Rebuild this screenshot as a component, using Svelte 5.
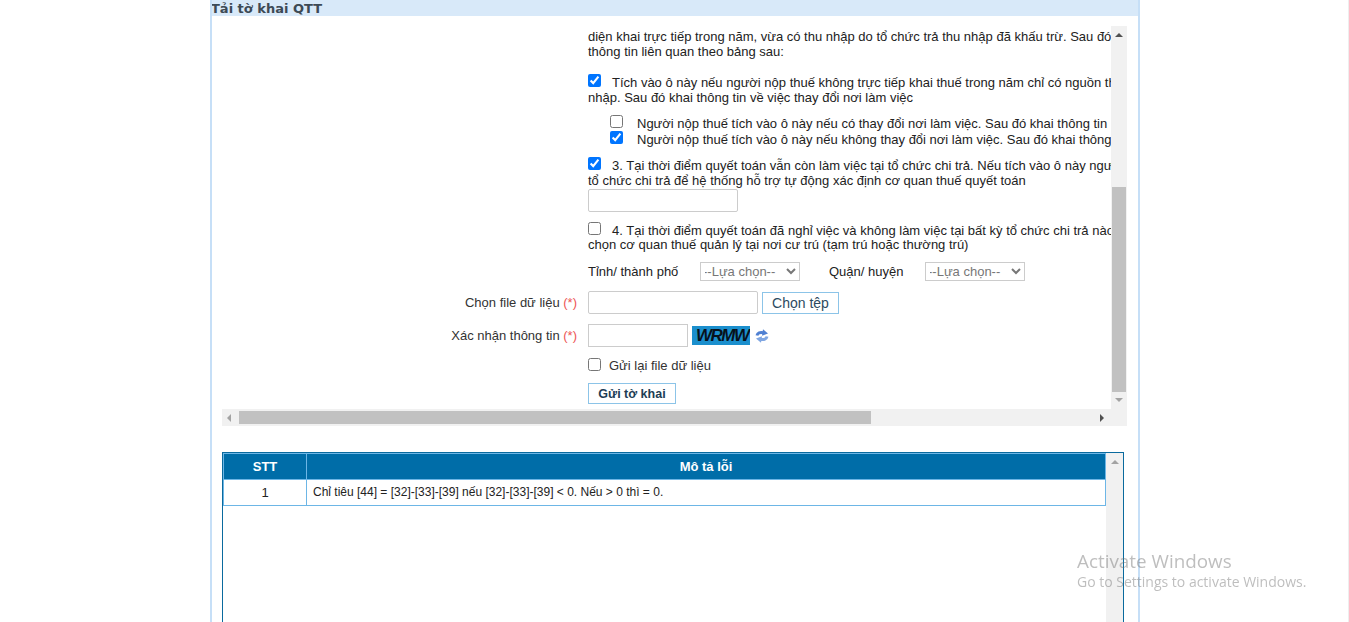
<script>
    // Dữ liệu bảng lỗi
    let errors = [
        { stt: 1, text: 'Chỉ tiêu [44] = [32]-[33]-[39] nếu [32]-[33]-[39] < 0. Nếu > 0 thì = 0.' }
    ];
</script>

<div class="panel">
    <div class="panel-title">Tải tờ khai QTT</div>

    <div class="panel-body">
        <div class="scrollbox">
            <div class="viewport">
                <div class="form">
                    <div class="field intro">
                        <p>diện khai trực tiếp trong năm, vừa có thu nhập do tổ chức trả thu nhập đã khấu trừ. Sau đó khai</p>
                        <p>thông tin liên quan theo bảng sau:</p>
                    </div>

                    <div class="field check-1">
                        <p><input type="checkbox" checked /><span class="lead">Tích vào ô này nếu người nộp thuế không trực tiếp khai thuế trong năm chỉ có nguồn thu</span></p>
                        <p>nhập. Sau đó khai thông tin về việc thay đổi nơi làm việc</p>
                    </div>

                    <div class="field sub">
                        <p><input type="checkbox" /><span class="sub-text">Người nộp thuế tích vào ô này nếu có thay đổi nơi làm việc. Sau đó khai thông tin</span></p>
                        <p><input type="checkbox" checked /><span class="sub-text">Người nộp thuế tích vào ô này nếu không thay đổi nơi làm việc. Sau đó khai thông tin</span></p>
                    </div>

                    <div class="field check-3">
                        <p><input type="checkbox" checked /><span class="lead">3. Tại thời điểm quyết toán vẫn còn làm việc tại tổ chức chi trả. Nếu tích vào ô này người</span></p>
                        <p>tổ chức chi trả để hệ thống hỗ trợ tự động xác định cơ quan thuế quyết toán</p>
                        <input class="text org" type="text" />
                    </div>

                    <div class="field check-4">
                        <p><input type="checkbox" /><span class="lead">4. Tại thời điểm quyết toán đã nghỉ việc và không làm việc tại bất kỳ tổ chức chi trả nào</span></p>
                        <p>chọn cơ quan thuế quản lý tại nơi cư trú (tạm trú hoặc thường trú)</p>
                    </div>

                    <div class="field place">
                        <span class="place-label">Tỉnh/ thành phố</span>
                        <select><option>--Lựa chọn--</option></select>
                        <span class="place-label second">Quận/ huyện</span>
                        <select><option>--Lựa chọn--</option></select>
                    </div>

                    <div class="row file-row">
                        <span class="label">Chọn file dữ liệu <em>(*)</em></span>
                        <div class="inline">
                            <input class="text file" type="text" />
                            <button class="pick">Chọn tệp</button>
                        </div>
                    </div>

                    <div class="row captcha-row">
                        <span class="label">Xác nhận thông tin <em>(*)</em></span>
                        <div class="inline">
                            <input class="text code" type="text" />
                            <div class="captcha"><span>WRMW</span></div>
                            <svg class="refresh" width="14" height="16" viewBox="0 0 14 16">
                                <path d="M2 7.500C2.500 5 5 3.800 8.500 4.800" fill="none" stroke="#4f80d2" stroke-width="3" />
                                <path d="M8 1.200l5 4.300-6 2.300z" fill="#4f80d2" />
                                <path d="M12 8.500C11.500 11 9 12.200 5.500 11.200" fill="none" stroke="#7fa6e2" stroke-width="3" />
                                <path d="M6 14.800l-5-4.300 6-2.300z" fill="#7fa6e2" />
                            </svg>
                        </div>
                    </div>

                    <div class="field resend">
                        <input type="checkbox" /><span>Gửi lại file dữ liệu</span>
                    </div>

                    <div class="field submit">
                        <button class="send">Gửi tờ khai</button>
                    </div>
                </div>
            </div>

            <div class="vbar">
                <span class="arrow up"></span>
                <div class="vspace"><div class="vthumb"></div></div>
                <span class="arrow down"></span>
            </div>

            <div class="hbar">
                <span class="arrow left"></span>
                <div class="hspace"><div class="hthumb"></div></div>
                <span class="arrow right"></span>
            </div>
            <div class="corner"></div>
        </div>

        <div class="errors">
            <div class="errors-main">
                <table>
                    <thead>
                        <tr><th class="col-stt">STT</th><th>Mô tả lỗi</th></tr>
                    </thead>
                    <tbody>
                        {#each errors as e}
                            <tr><td class="col-stt num">{e.stt}</td><td>{e.text}</td></tr>
                        {/each}
                    </tbody>
                </table>
            </div>
            <div class="errors-bar"><span class="arrow up"></span></div>
        </div>
    </div>
</div>

<div class="watermark">
    <div class="wm-title">Activate Windows</div>
    <div class="wm-sub">Go to Settings to activate Windows.</div>
</div>

<style>
    :global(body) {
        background: #fff;
        overflow: hidden;
        border-right: 1px solid #eee;
    }

    /* KHUNG CHÍNH */
    .panel {
        box-sizing: border-box;
        width: 930px;
        height: 622px;
        margin-left: 210px;
        border-left: 2px solid #c6dff7;
        border-right: 2px solid #c6dff7;
        overflow: hidden;
        font: 13px/15px "Liberation Sans", Arial, sans-serif;
        color: #222;
    }
    .panel-title {
        height: 16px;
        margin: 0 -2px;
        padding-left: 1px;
        background: #d8e9f9;
        color: #3d4a55;
        font: bold 13px/17px "DejaVu Sans", Verdana, sans-serif;
    }
    .panel-body {
        padding: 10px 0 0 10px;
    }

    /* VÙNG CUỘN */
    .scrollbox {
        display: grid;
        grid-template-columns: 889px 16px;
        grid-template-rows: 383px 17px;
        width: 905px;
    }
    .viewport {
        overflow: hidden;
        background: #fff;
    }
    .form {
        width: 1200px;
    }
    .form p {
        margin: 0;
        white-space: nowrap;
        height: 15px;
    }
    .form input[type="checkbox"] {
        margin: 0;
        width: 13px;
        height: 13px;
        vertical-align: 0;
    }
    .field {
        padding-left: 366px;
    }
    .intro {
        padding-top: 3px;
    }
    .check-1 {
        margin-top: 15px;
    }
    .form .check-1 p:first-child {
        height: 16px;
    }
    .lead {
        margin-left: 11px;
    }
    .sub {
        margin-top: 10px;
        padding-left: 388px;
        line-height: 16px;
    }
    .form .sub p {
        height: 16px;
    }
    .sub-text {
        margin-left: 14px;
    }
    .check-3 {
        margin-top: 10px;
    }
    .form .check-3 p {
        height: 16px;
    }
    .text {
        box-sizing: border-box;
        display: block;
        margin: 0;
        padding: 0 4px;
        border: 1px solid #ccc;
        background: #fff;
        border-radius: 2px;
    }
    .org {
        width: 150px;
        height: 23px;
    }
    .check-4 {
        margin-top: 10px;
    }
    .place {
        display: flex;
        align-items: center;
        height: 19px;
        margin-top: 10px;
    }
    .place-label {
        width: 112px;
    }
    .place-label.second {
        width: 96px;
        margin-left: 29px;
    }
    select {
        box-sizing: border-box;
        width: 100px;
        height: 19px;
        padding: 0;
        border: 1px solid #ccc;
        border-radius: 0;
        background: #fff;
        color: #777;
        font: 13px "Liberation Sans", Arial, sans-serif;
        text-indent: -2px;
    }

    /* HÀNG CÓ NHÃN */
    .row {
        display: grid;
        grid-template-columns: 355px 1fr;
        column-gap: 11px;
        align-items: center;
    }
    .label {
        text-align: right;
        color: #333;
    }
    .label em {
        color: #e55;
        font-style: normal;
    }
    .inline {
        display: flex;
        align-items: center;
    }
    .file-row {
        margin-top: 10px;
    }
    .file {
        width: 170px;
        height: 23px;
    }
    .pick {
        box-sizing: border-box;
        width: 77px;
        height: 22px;
        margin-left: 4px;
        padding: 0;
        border: 1px solid #8cc4e8;
        background: #fff;
        color: #2c4a60;
        font: 14px "Liberation Sans", Arial, sans-serif;
    }
    .captcha-row {
        margin-top: 10px;
    }
    .code {
        width: 100px;
        height: 23px;
        border-radius: 0;
    }
    .captcha {
        box-sizing: border-box;
        width: 58px;
        height: 19px;
        margin-left: 4px;
        overflow: hidden;
        background: #1b8fcd;
        color: #07121c;
        font: italic bold 17px/19px "Liberation Sans", Arial, sans-serif;
        letter-spacing: -1.5px;
        white-space: nowrap;
        padding-left: 4px;
    }
    .refresh {
        margin-left: 5px;
    }
    .resend {
        margin-top: 11px;
        display: flex;
        align-items: center;
        height: 15px;
        color: #333;
    }
    .form .resend input {
        margin-top: -3px;
    }
    .resend span {
        margin-left: 8px;
    }
    .submit {
        margin-top: 10px;
    }
    .send {
        box-sizing: border-box;
        display: block;
        width: 88px;
        height: 21px;
        padding: 0;
        border: 1px solid #8cc4e8;
        background: #fff;
        color: #1d3d55;
        font: bold 12.500px "Liberation Sans", Arial, sans-serif;
    }

    /* THANH CUỘN */
    .vbar, .hbar, .errors-bar, .corner {
        background: #f1f1f1;
    }
    .vbar {
        display: flex;
        flex-direction: column;
        align-items: center;
    }
    .vspace {
        flex: 1;
        width: 100%;
        padding: 150px 1px 0;
        box-sizing: border-box;
    }
    .vthumb {
        height: 205px;
        background: #c1c1c1;
    }
    .hbar {
        display: flex;
        align-items: center;
    }
    .hspace {
        flex: 1;
    }
    .hthumb {
        width: 632px;
        height: 13px;
        background: #c1c1c1;
    }
    .arrow {
        flex: none;
        display: block;
        width: 0;
        height: 0;
        border: 4px solid transparent;
    }
    .arrow.up {
        margin-top: 7px;
        border-top: 0;
        border-bottom: 4px solid #505050;
    }
    .arrow.down {
        margin-bottom: 7px;
        border-bottom: 0;
        border-top: 4px solid #a3a3a3;
    }
    .arrow.left {
        margin: 0 8px 0 5px;
        border-left: 0;
        border-right: 4px solid #a3a3a3;
    }
    .arrow.right {
        margin: 0 7px 0 0;
        border-right: 0;
        border-left: 4px solid #505050;
    }

    /* BẢNG LỖI */
    .errors {
        box-sizing: border-box;
        display: flex;
        width: 902px;
        height: 180px;
        margin-top: 26px;
        border: 1px solid #0a6a9e;
    }
    .errors-main {
        flex: 1;
    }
    .errors-bar {
        display: flex;
        justify-content: center;
        flex: none;
        width: 17px;
    }
    .errors-bar .arrow.up {
        margin-top: 7px;
        border-bottom-color: #a3a3a3;
    }
    table {
        width: 100%;
        border-collapse: collapse;
        table-layout: fixed;
    }
    th, td {
        padding: 0;
        border: 1px solid #6db6e6;
    }
    th {
        height: 25px;
        background: #006da8;
        color: #fff;
        font: bold 13px "Liberation Sans", Arial, sans-serif;
    }
    td {
        height: 25px;
        padding-left: 6px;
        font-size: 12px;
        background: #fff;
    }
    .col-stt {
        width: 82px;
    }
    td.num {
        padding: 0;
        text-align: center;
        font-size: 13px;
    }

    /* WATERMARK */
    .watermark {
        position: fixed;
        left: 1077px;
        top: 550px;
        color: rgba(110, 110, 110, 0.45);
        font-family: "Open Sans", "Noto Sans", sans-serif;
        pointer-events: none;
    }
    .wm-title {
        font-size: 18.850px;
        line-height: 23px;
    }
    .wm-sub {
        font-size: 14px;
        line-height: 18px;
    }
</style>
